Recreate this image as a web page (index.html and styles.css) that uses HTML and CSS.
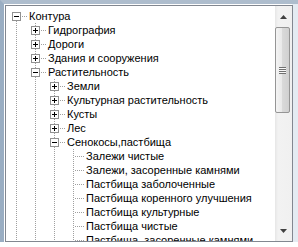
FILE: index.html
```html
<!DOCTYPE html>
<html lang="ru">
<head>
    <meta charset="UTF-8">
    <title>Контура</title>
    <link rel="stylesheet" href="styles.css">
</head>
<body>
<div class="frame">
    <div class="tree-box">
        <div class="tree">
            <div class="row">
                <span class="cell node first"><span class="box minus"></span></span>
                <span class="label">Контура</span>
            </div>
            <div class="row">
                <span class="cell line"></span>
                <span class="cell node"><span class="box plus"></span></span>
                <span class="label">Гидрография</span>
            </div>
            <div class="row">
                <span class="cell line"></span>
                <span class="cell node"><span class="box plus"></span></span>
                <span class="label">Дороги</span>
            </div>
            <div class="row">
                <span class="cell line"></span>
                <span class="cell node"><span class="box plus"></span></span>
                <span class="label">Здания и сооружения</span>
            </div>
            <div class="row">
                <span class="cell line"></span>
                <span class="cell node"><span class="box minus"></span></span>
                <span class="label">Растительность</span>
            </div>
            <div class="row">
                <span class="cell line"></span>
                <span class="cell line"></span>
                <span class="cell node"><span class="box plus"></span></span>
                <span class="label">Земли</span>
            </div>
            <div class="row">
                <span class="cell line"></span>
                <span class="cell line"></span>
                <span class="cell node"><span class="box plus"></span></span>
                <span class="label">Культурная растительность</span>
            </div>
            <div class="row">
                <span class="cell line"></span>
                <span class="cell line"></span>
                <span class="cell node"><span class="box plus"></span></span>
                <span class="label">Кусты</span>
            </div>
            <div class="row">
                <span class="cell line"></span>
                <span class="cell line"></span>
                <span class="cell node"><span class="box plus"></span></span>
                <span class="label">Лес</span>
            </div>
            <div class="row">
                <span class="cell line"></span>
                <span class="cell line"></span>
                <span class="cell node"><span class="box minus"></span></span>
                <span class="label">Сенокосы,пастбища</span>
            </div>
            <div class="row">
                <span class="cell line"></span>
                <span class="cell line"></span>
                <span class="cell line"></span>
                <span class="cell leaf"></span>
                <span class="label">Залежи чистые</span>
            </div>
            <div class="row">
                <span class="cell line"></span>
                <span class="cell line"></span>
                <span class="cell line"></span>
                <span class="cell leaf"></span>
                <span class="label">Залежи, засоренные камнями</span>
            </div>
            <div class="row">
                <span class="cell line"></span>
                <span class="cell line"></span>
                <span class="cell line"></span>
                <span class="cell leaf"></span>
                <span class="label">Пастбища заболоченные</span>
            </div>
            <div class="row">
                <span class="cell line"></span>
                <span class="cell line"></span>
                <span class="cell line"></span>
                <span class="cell leaf"></span>
                <span class="label">Пастбища коренного улучшения</span>
            </div>
            <div class="row">
                <span class="cell line"></span>
                <span class="cell line"></span>
                <span class="cell line"></span>
                <span class="cell leaf"></span>
                <span class="label">Пастбища культурные</span>
            </div>
            <div class="row">
                <span class="cell line"></span>
                <span class="cell line"></span>
                <span class="cell line"></span>
                <span class="cell leaf"></span>
                <span class="label">Пастбища чистые</span>
            </div>
            <div class="row">
                <span class="cell line"></span>
                <span class="cell line"></span>
                <span class="cell line"></span>
                <span class="cell leaf"></span>
                <span class="label">Пастбища, засоренные камнями</span>
            </div>
        </div>
        <div class="scrollbar">
            <div class="sb-btn">
                <svg width="7" height="4" viewBox="0 0 7 4"><path d="M3.5 0 L7 4 L0 4 Z" fill="#404040"/></svg>
            </div>
            <div class="sb-track">
                <div class="sb-thumb">
                    <span class="grip"></span>
                </div>
            </div>
            <div class="sb-btn">
                <svg width="7" height="4" viewBox="0 0 7 4"><path d="M0 0 L7 0 L3.5 4 Z" fill="#404040"/></svg>
            </div>
        </div>
    </div>
</div>
</body>
</html>
```

FILE: styles.css
```css
body {
    margin: 0;
    width: 298px;
    height: 247px;
    overflow: hidden;
    background: #fff;
    font-family: 'Liberation Sans', Arial, sans-serif;
    font-size: 11px;
    color: #000;
}

.frame {
    height: 237px;
    padding: 1px 0 0 1px;
    border-top: 4px solid #aebdcd;
    border-left: 4px solid #9aaec3;
    background: linear-gradient(to right, transparent 288px, #e4ebf2 288px);
}

.tree-box {
    width: 286px;
    height: 235px;
    border: 1px solid #828790;
    background: #fff;
    display: flex;
}

.tree {
    flex: 1;
    overflow: hidden;
    padding: 3px 0 0 3px;
    white-space: nowrap;
}

.row {
    display: flex;
    height: 14px;
    align-items: center;
}

.cell {
    flex: none;
    width: 19px;
    height: 14px;
    background-repeat: no-repeat;
}

/* dotted guide lines */
.line,
.node {
    background-image: repeating-linear-gradient(to bottom, #a0a0a0 0 1px, transparent 1px 2px);
    background-size: 1px 14px;
    background-position: 7px 0;
}

.node {
    background-image:
        repeating-linear-gradient(to bottom, #a0a0a0 0 1px, transparent 1px 2px),
        repeating-linear-gradient(to right, #a0a0a0 0 1px, transparent 1px 2px);
    background-size: 1px 14px, 6px 1px;
    background-position: 7px 0, 13px 7px;
}

.node.first {
    background-size: 1px 6px, 6px 1px;
    background-position: 7px 8px, 13px 7px;
}

.leaf {
    background-image:
        repeating-linear-gradient(to bottom, #a0a0a0 0 1px, transparent 1px 2px),
        repeating-linear-gradient(to right, #a0a0a0 0 1px, transparent 1px 2px);
    background-size: 1px 14px, 10px 1px;
    background-position: 7px 0, 9px 7px;
}

.box {
    display: block;
    width: 7px;
    height: 7px;
    margin: 3px 0 0 3px;
    border: 1px solid #919191;
    background: #fff;
}

.box.minus {
    background:
        linear-gradient(#000, #000) center / 5px 1px no-repeat,
        #fff;
}

.box.plus {
    background:
        linear-gradient(#000, #000) center / 5px 1px no-repeat,
        linear-gradient(#000, #000) center / 1px 5px no-repeat,
        #fff;
}

.label {
    padding-left: 1px;
    line-height: 14px;
}

.scrollbar {
    flex: none;
    width: 17px;
    display: flex;
    flex-direction: column;
    background: linear-gradient(to right, #e6e6e6, #f2f2f2 3px, #f0f0f0);
}

.sb-btn {
    height: 21px;
    display: flex;
    align-items: center;
    justify-content: center;
    padding-right: 1px;
}

.sb-track {
    flex: 1;
    padding-top: 0;
}

.sb-thumb {
    width: 13px;
    height: 84px;
    border: 1px solid #959595;
    border-radius: 2px;
    background: linear-gradient(to right, #f4f4f4, #e9e9e9 45%, #d9d9d9 50%, #d0d0d0);
    display: flex;
    align-items: center;
    justify-content: center;
}

.grip {
    width: 7px;
    height: 7px;
    background: repeating-linear-gradient(to bottom, #707070 0 1px, #f8f8f8 1px 2px);
}
```
